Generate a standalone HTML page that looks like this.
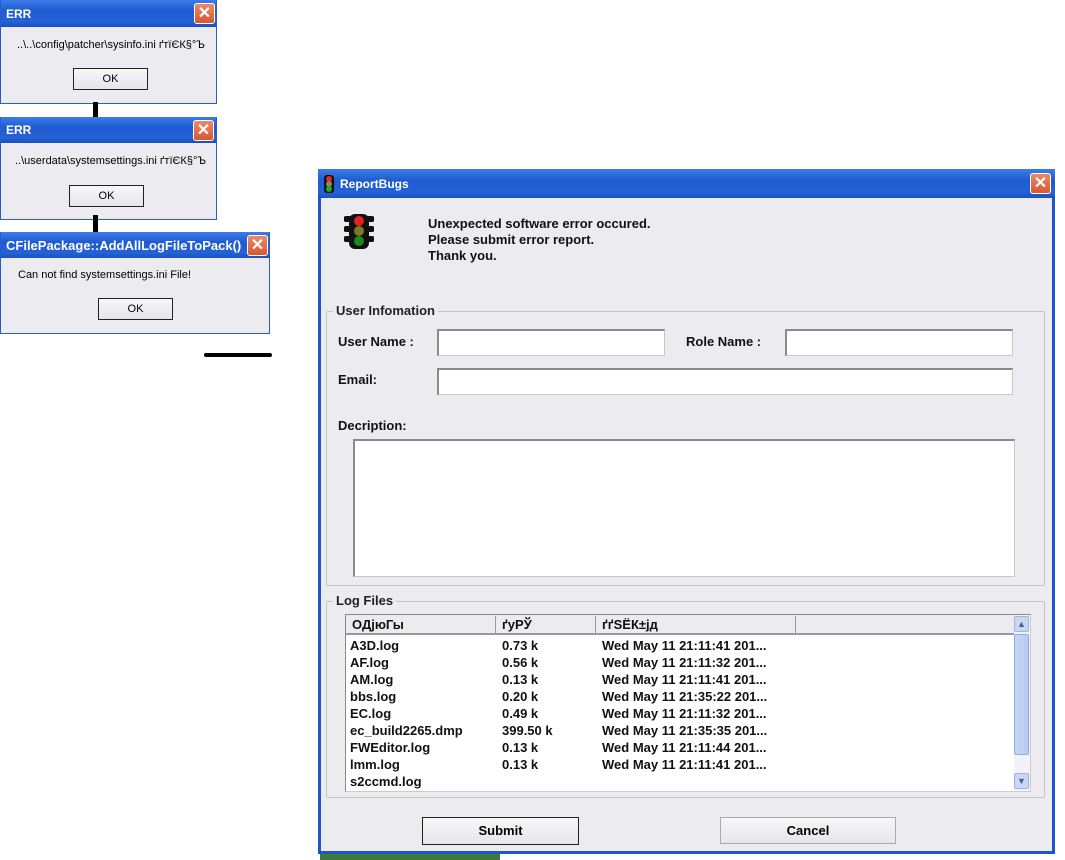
<!DOCTYPE html>
<html><head><meta charset="utf-8"><style>
*{box-sizing:border-box;margin:0;padding:0}
body{width:1065px;height:860px;background:#fff;position:relative;overflow:hidden;font-family:"Liberation Sans",sans-serif}
.a{position:absolute}
.dlg{position:absolute;background:#ecebef;border:1px solid #2a5cc8;border-top:none}
.tb{position:absolute;left:0;right:0;top:0;background:linear-gradient(#3b7de8,#1f5bd0 40%,#2462d6 80%,#1a4fbf);color:#fff;font-weight:bold;font-size:12px;padding-left:5px;display:flex;align-items:center}
.x{position:absolute;width:21px;height:21px;border:1px solid #fff;border-radius:3px;background:linear-gradient(#e98a6a,#d8582f);color:#fff;font-size:16px;line-height:19px;text-align:center;font-weight:bold}
.btn{position:absolute;border:1px solid #222;background:linear-gradient(#f7f7f7,#e6e5ea);font-size:11px;text-align:center}
.lbl{position:absolute;font-size:13px;font-weight:bold;color:#111}
.inp{position:absolute;background:#fff;border:1px solid #c8c8c8;border-top:2px solid #8a8a8a;border-left:2px solid #8a8a8a}
.grp{position:absolute;border:1px solid #c4c4c8;border-radius:2px}
.grp span{position:absolute;top:-9px;left:6px;background:#ecebef;padding:0 3px;font-size:13px;font-weight:bold;color:#222}
.row{position:absolute;left:350px;font-size:13px;font-weight:bold;color:#111;height:17px;width:640px}
.row b{position:absolute;font-weight:bold}
</style></head><body>
<!-- dialog 1 -->
<div class="dlg" style="left:0;top:0;width:217px;height:104px">
<div class="tb" style="height:27px">ERR</div><div class="x" style="left:193px;top:3px">✕</div>
<div class="a" style="left:16px;top:39px;font-size:11px">..\..\config\patcher\sysinfo.ini ґтїЄК§°Ъ</div>
<div class="btn" style="left:72px;top:68px;width:75px;height:22px;line-height:20px">OK</div></div>
<div class="a" style="left:93px;top:102px;width:5px;height:18px;background:#000"></div>
<!-- dialog 2 -->
<div class="dlg" style="left:0;top:117px;width:217px;height:103px">
<div class="tb" style="height:26px">ERR</div><div class="x" style="left:192px;top:3px">✕</div>
<div class="a" style="left:14px;top:38px;font-size:11px">..\userdata\systemsettings.ini ґтїЄК§°Ъ</div>
<div class="btn" style="left:68px;top:68px;width:75px;height:22px;line-height:20px">OK</div></div>
<div class="a" style="left:93px;top:215px;width:5px;height:18px;background:#000"></div>
<!-- dialog 3 -->
<div class="dlg" style="left:0;top:232px;width:270px;height:102px">
<div class="tb" style="height:26px;font-size:13px">CFilePackage::AddAllLogFileToPack()</div><div class="x" style="left:246px;top:3px">✕</div>
<div class="a" style="left:17px;top:37px;font-size:11px">Can not find systemsettings.ini File!</div>
<div class="btn" style="left:97px;top:66px;width:75px;height:22px;line-height:20px">OK</div></div>
<div class="a" style="left:204px;top:353px;width:68px;height:4px;background:#000;border-radius:2px"></div>
<!-- main -->
<div class="dlg" style="left:318px;top:169px;width:737px;height:685px;border:3px solid #1f55c8;border-top:none"></div>
<div class="tb a" style="left:318px;top:169px;width:737px;height:29px;padding-left:22px">ReportBugs</div>
<svg class="a" style="left:321px;top:175px" width="16" height="18" viewBox="0 0 16 18"><rect x="3" y="0" width="10" height="18" rx="3" fill="#111"/><circle cx="8" cy="4" r="3" fill="#e22"/><circle cx="8" cy="9" r="3" fill="#886"/><circle cx="8" cy="14" r="3" fill="#2a2"/></svg>
<div class="x" style="left:1030px;top:173px">✕</div>
<svg class="a" style="left:344px;top:213px" width="30" height="37" viewBox="0 0 30 37"><path d="M2 6h26M2 16h26M2 26h26" stroke="#111" stroke-width="6" stroke-linecap="round"/><rect x="5" y="1" width="20" height="35" rx="6" fill="#111"/><circle cx="15" cy="8" r="5" fill="#e42020"/><circle cx="15" cy="18" r="5" fill="#7a7a22"/><circle cx="15" cy="28" r="5" fill="#1a8a1a"/></svg>
<div class="lbl" style="left:428px;top:216px;line-height:16px">Unexpected software error occured.<br>Please submit error report.<br>Thank you.</div>
<div class="grp" style="left:326px;top:311px;width:719px;height:275px"><span>User Infomation</span></div>
<div class="lbl" style="left:338px;top:334px">User Name :</div>
<div class="inp" style="left:437px;top:329px;width:228px;height:27px"></div>
<div class="lbl" style="left:686px;top:334px">Role Name :</div>
<div class="inp" style="left:785px;top:329px;width:228px;height:27px"></div>
<div class="lbl" style="left:338px;top:372px">Email:</div>
<div class="inp" style="left:437px;top:368px;width:576px;height:27px"></div>
<div class="lbl" style="left:338px;top:418px">Decription:</div>
<div class="inp" style="left:353px;top:439px;width:662px;height:138px"></div>
<div class="grp" style="left:326px;top:601px;width:719px;height:197px"><span>Log Files</span></div>
<div class="inp" style="left:345px;top:614px;width:686px;height:178px;border-color:#8a8a8a #ccc #ccc #8a8a8a;border-width:1px"></div>
<div class="a" style="left:346px;top:615px;width:668px;height:20px;background:#ecebef;border-bottom:2px solid #999"></div>
<div class="a" style="left:495px;top:616px;width:1px;height:17px;background:#999"></div>
<div class="a" style="left:595px;top:616px;width:1px;height:17px;background:#999"></div>
<div class="a" style="left:795px;top:616px;width:1px;height:17px;background:#999"></div>
<div class="row" style="top:617px"><b style="left:2px">ОДјюГы</b><b style="left:152px">ґуРЎ</b><b style="left:252px">ґґЅЁК±јд</b></div>
<div class="row" style="top:638px"><b style="left:0">A3D.log</b><b style="left:152px">0.73 k</b><b style="left:252px">Wed May 11 21:11:41 201...</b></div>
<div class="row" style="top:655px"><b style="left:0">AF.log</b><b style="left:152px">0.56 k</b><b style="left:252px">Wed May 11 21:11:32 201...</b></div>
<div class="row" style="top:672px"><b style="left:0">AM.log</b><b style="left:152px">0.13 k</b><b style="left:252px">Wed May 11 21:11:41 201...</b></div>
<div class="row" style="top:689px"><b style="left:0">bbs.log</b><b style="left:152px">0.20 k</b><b style="left:252px">Wed May 11 21:35:22 201...</b></div>
<div class="row" style="top:706px"><b style="left:0">EC.log</b><b style="left:152px">0.49 k</b><b style="left:252px">Wed May 11 21:11:32 201...</b></div>
<div class="row" style="top:723px"><b style="left:0">ec_build2265.dmp</b><b style="left:152px">399.50 k</b><b style="left:252px">Wed May 11 21:35:35 201...</b></div>
<div class="row" style="top:740px"><b style="left:0">FWEditor.log</b><b style="left:152px">0.13 k</b><b style="left:252px">Wed May 11 21:11:44 201...</b></div>
<div class="row" style="top:757px"><b style="left:0">lmm.log</b><b style="left:152px">0.13 k</b><b style="left:252px">Wed May 11 21:11:41 201...</b></div>
<div class="row" style="top:774px"><b style="left:0">s2ccmd.log</b></div>
<div class="a" style="left:1014px;top:615px;width:16px;height:176px;background:#f2f3f7"></div>
<div class="a" style="left:1014px;top:616px;width:15px;height:16px;background:#c8d8f4;border:1px solid #9db4e0;border-radius:2px;font-size:9px;text-align:center;line-height:14px;color:#4d6185">▲</div>
<div class="a" style="left:1014px;top:634px;width:15px;height:121px;background:linear-gradient(90deg,#c6d6f6,#b6cbf2);border:1px solid #8eaae0;border-radius:2px"></div>
<div class="a" style="left:1014px;top:773px;width:15px;height:16px;background:#c8d8f4;border:1px solid #9db4e0;border-radius:2px;font-size:9px;text-align:center;line-height:14px;color:#4d6185">▼</div>
<div class="btn" style="left:422px;top:817px;width:157px;height:28px;line-height:26px;font-size:13px;font-weight:bold">Submit</div>
<div class="btn" style="left:720px;top:817px;width:176px;height:27px;line-height:25px;font-size:13px;font-weight:bold;border-color:#aaa">Cancel</div>
<div class="a" style="left:320px;top:854px;width:180px;height:6px;background:#3a7a3a"></div>
</body></html>
